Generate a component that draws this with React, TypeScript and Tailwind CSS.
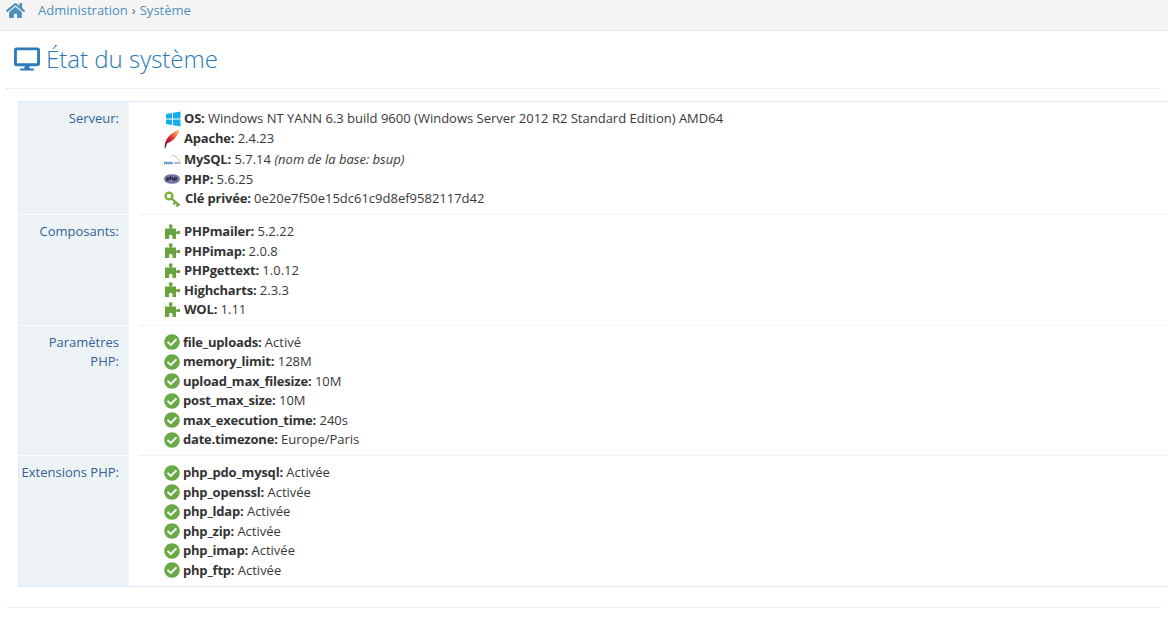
import type { ReactNode } from "react";
import { FaHome, FaDesktop, FaCheckCircle } from "react-icons/fa";

const Windows = () => (
  <svg width="16" height="16" viewBox="0 0 16 16" className="shrink-0 ml-[1px]">
    <path d="M1 3 L7 2 V7.5 H1 Z M8 1.8 L15.5 0.6 V7.5 H8 Z M1 8.5 H7 V14 L1 13 Z M8 8.5 H15.5 V15.4 L8 14.2 Z" fill="#14b0ee" />
  </svg>
);

const Feather = () => (
  <svg width="16" height="20" viewBox="0 0 16 20" className="shrink-0">
    <defs>
      <linearGradient id="feather" x1="0" y1="1" x2="1" y2="0">
        <stop offset="0" stopColor="#5a1048" />
        <stop offset="0.45" stopColor="#e0203a" />
        <stop offset="0.8" stopColor="#f59a50" />
        <stop offset="1" stopColor="#f8d080" />
      </linearGradient>
    </defs>
    <path d="M0.8 19.5 C0 12 5 4 15.5 0.5 C14 7 10 11.5 3 14.5 L1.4 19.5 Z" fill="url(#feather)" />
  </svg>
);

const MysqlLogo = () => (
  <svg width="17" height="11" viewBox="0 0 17 11" className="shrink-0">
    <path d="M0 9h9" stroke="#4a86b8" strokeWidth="2.4" strokeDasharray="1.6 .5" />
    <path d="M8 1 C12 2 15 5 16.5 10" fill="none" stroke="#cdbb98" strokeWidth="1" />
    <path d="M10 9h6" stroke="#a8c2d6" strokeWidth="2" />
  </svg>
);

const PhpLogo = () => (
  <svg width="16" height="10" viewBox="0 0 16 10" className="shrink-0">
    <ellipse cx="8" cy="5" rx="8" ry="4.8" fill="#7072a8" />
    <path d="M3 7.2V3.8h2.1v1.8H3M6.6 2.2v3.6M6.6 4h2v1.8M10 7.2V3.8h2.4v1.8H10" fill="none" stroke="#15151f" strokeWidth="0.9" />
  </svg>
);

const KeyIcon = () => (
  <svg width="17" height="16" viewBox="0 0 17 16" className="shrink-0">
    <circle cx="5" cy="5" r="3.4" fill="none" stroke="#7fb03a" strokeWidth="2.4" />
    <path d="M7.5 7.5 L15.5 14.5 M11.5 11 L9.5 13.5 M14 13 L12.5 15.5" fill="none" stroke="#6ea535" strokeWidth="2.2" />
  </svg>
);

const Puzzle = () => (
  <svg width="16" height="16" viewBox="0 0 16 16" className="shrink-0">
    <path
      d="M5 0.5 H8.5 V3 L7.5 4.5 H12 V8 L13.5 7 H16 V10 H13.5 L12 9.5 V15 H8.5 V12.5 Q8.5 10.8 6.8 10.8 Q5 10.8 5 12.5 V15 H1 V4.5 H6 L5 3 Z"
      fill="#69a33d"
    />
  </svg>
);

const Check = () => <FaCheckCircle className="shrink-0 text-[16px] text-[#69aa46]" />;

function Item({ icon, name, gap = "gap-1", height = "h-[19.5px]", children }: { icon: ReactNode; name: string; gap?: string; height?: string; children: ReactNode }) {
  return (
    <div className={`flex items-center whitespace-nowrap ${height} ${gap}`}>
      <span className="w-[16px] flex justify-center shrink-0">{icon}</span>
      <span>
        <b className="font-bold text-[#333] tracking-[-0.2px]">{name}:</b> {children}
      </span>
    </div>
  );
}

function Row({ label, last, children }: { label: ReactNode; last?: boolean; children: ReactNode }) {
  return (
    <div className="flex">
      <div className={`w-[110px] shrink-0 bg-[#edf3f4] text-right text-[#336199] pr-[10px] ${last ? "pt-[7.5px] pb-[6px]" : "pt-[7px] pb-[5px] border-b border-white"}`}>
        {label}
      </div>
      <div className={`flex-1 ml-[10px] pl-[25px] ${last ? "pt-[7.5px] pb-[6px]" : "pt-[7px] pb-[5px] border-b border-dotted border-[#dcebf7]"}`}>
        {children}
      </div>
    </div>
  );
}

const components = [
  ["PHPmailer", "5.2.22"],
  ["PHPimap", "2.0.8"],
  ["PHPgettext", "1.0.12"],
  ["Highcharts", "2.3.3"],
  ["WOL", "1.11"],
];

const phpParams = [
  ["file_uploads", "Activé"],
  ["memory_limit", "128M"],
  ["upload_max_filesize", "10M"],
  ["post_max_size", "10M"],
  ["max_execution_time", "240s"],
  ["date.timezone", "Europe/Paris"],
];

const extensions = ["php_pdo_mysql", "php_openssl", "php_ldap", "php_zip", "php_imap", "php_ftp"];

export default function App() {
  return (
    <div className="h-[621px] overflow-hidden bg-white text-[13px] leading-[19.5px] text-[#393939] font-['Open_Sans',sans-serif]">
      {/* breadcrumb */}
      <div className="h-[31px] bg-[#f5f5f5] border-b border-[#e5e5e5] flex items-start pl-[6px] text-[#4c8fbd]">
        <FaHome className="text-[19px] text-[#4c8fbd] mt-[1px]" />
        <span className="ml-[13px] leading-[20px]">Administration</span>
        <span className="mx-[4px] leading-[20px] text-[#555]">›</span>
        <span className="leading-[20px]">Système</span>
      </div>

      <div className="px-[6px]">
        {/* title */}
        <div className="mt-[12px] h-[46px] border-b border-dotted border-[#e2e2e2] flex items-start pl-[8px] gap-[6px]">
          <FaDesktop className="text-[26px] text-[#2f7cba] mt-[3px]" />
          <h1 className="text-[24px] leading-[33px] -mt-[1px] font-light text-[#2679b5]">État du système</h1>
        </div>

        {/* info table */}
        <div className="mt-[12px] ml-[12px] -mr-[6px] border border-r-0 border-[#dcebf7]">
          <Row label="Serveur:">
            <Item icon={<Windows />} name="OS" height="h-[19px]">Windows NT YANN 6.3 build 9600 (Windows Server 2012 R2 Standard Edition) AMD64</Item>
            <Item icon={<Feather />} name="Apache" height="h-[21px]">2.4.23</Item>
            <Item icon={<MysqlLogo />} name="MySQL" height="h-[20.5px]">5.7.14 <i>(nom de la base: bsup)</i></Item>
            <Item icon={<PhpLogo />} name="PHP">5.6.25</Item>
            <Item icon={<KeyIcon />} name="Clé privée" gap="gap-[5px]" height="h-[19px] mb-[1px]">0e20e7f50e15dc61c9d8ef9582117d42</Item>
          </Row>
          <Row label="Composants:">
            {components.map(([name, value]) => (
              <Item key={name} icon={<Puzzle />} name={name}>{value}</Item>
            ))}
          </Row>
          <Row label={<>Paramètres<br />PHP:</>}>
            {phpParams.map(([name, value]) => (
              <Item key={name} icon={<Check />} name={name} gap="gap-[3px]">{value}</Item>
            ))}
          </Row>
          <Row label="Extensions PHP:" last>
            {extensions.map((name) => (
              <Item key={name} icon={<Check />} name={name} gap="gap-[3px]">Activée</Item>
            ))}
          </Row>
        </div>

        <div className="mt-[20px] border-t border-[#eeeeee]" />
      </div>
    </div>
  );
}
